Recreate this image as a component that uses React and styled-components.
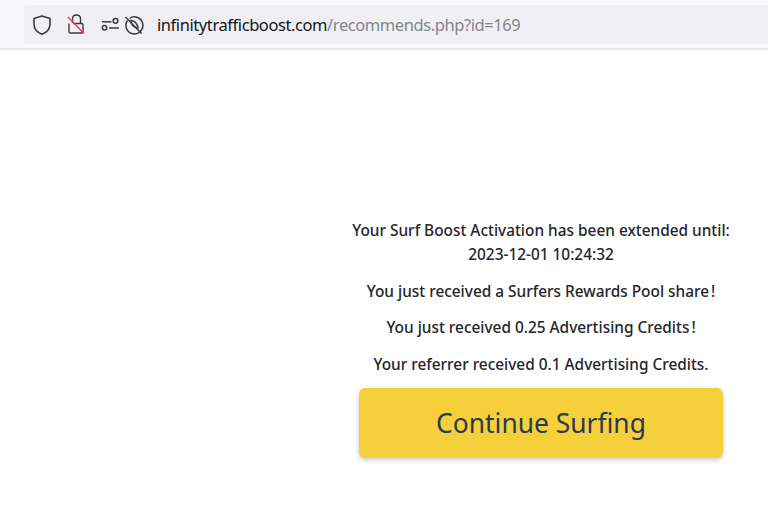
import styled, { createGlobalStyle } from 'styled-components'

const Global = createGlobalStyle`
  html, body {
    margin: 0;
    background: #fff;
  }
`

const Page = styled.div`
  width: 768px;
  height: 518px;
  overflow: hidden;
  background: #fff;
`

const Toolbar = styled.div`
  height: 43px;
  padding: 5px 0 0 24px;
  background: #f9f9fb;
  border-bottom: 2px solid #e6e6e8;
`

const UrlBar = styled.div`
  height: 39px;
  display: flex;
  align-items: center;
  background: #f0f0f4;
  border-radius: 4px 0 0 4px;
  padding-left: 8px;
`

const IconSlot = styled.span`
  display: flex;
  width: ${props => props.$w}px;
  margin-top: 1px;
`

const Host = styled.span`
  font-family: 'Noto Sans', sans-serif;
  font-size: 16.5px;
  letter-spacing: -0.42px;
  color: #15141a;
  margin-left: 10px;
`

const Path = styled.span`
  color: #85848a;
`

const Content = styled.main`
  display: flex;
  justify-content: flex-end;
  padding: 169px 31px 0 0;
`

const Column = styled.div`
  width: 392px;
  display: flex;
  flex-direction: column;
  align-items: center;
`

const Message = styled.p`
  margin: 0 0 12.5px;
  font-family: 'Noto Sans', sans-serif;
  font-size: 15.4px;
  font-weight: 500;
  line-height: 24px;
  color: #25252b;
  text-align: center;
`

const Bang = styled.span`
  margin-left: 2px;
`

const Button = styled.a`
  width: 364px;
  height: 70px;
  margin-top: -1px;
  display: flex;
  align-items: center;
  justify-content: center;
  background: #f5d03b;
  border-radius: 6px;
  box-shadow: 0 2px 5px rgba(0, 0, 0, 0.22);
  font-family: 'Noto Sans', sans-serif;
  font-size: 26.4px;
  color: #2b3a52;
`

const Shield = () => (
  <svg width="20" height="22" viewBox="0 0 20 22" fill="none" stroke="#3a3a40" strokeWidth="1.6">
    <path d="M10 2 L18 4.6 V10 C18 15 14.5 18.5 10 20.2 C5.5 18.5 2 15 2 10 V4.6 Z" strokeLinejoin="round" />
  </svg>
)

const BrokenLock = () => (
  <svg width="20" height="22" viewBox="0 0 20 22" fill="none">
    <path d="M6.5 9 V5 C6.5 2.6 8 1 10.5 1 C13 1 14.5 2.6 14.5 5 V9" stroke="#3a3a40" strokeWidth="1.4" />
    <path d="M7 9.5 H15.5 C16.4 9.5 17 10.1 17 11 V17.5 C17 18.4 16.4 19 15.5 19 H4.5 C3.6 19 3 18.4 3 17.5 V9.5" stroke="#3a3a40" strokeWidth="1.4" />
    <path d="M2 3 L18 19.5" stroke="#f0385f" strokeWidth="1.5" />
  </svg>
)

const Permissions = () => (
  <svg width="20" height="16" viewBox="0 0 20 16" fill="none" stroke="#3a3a40" strokeWidth="1.5">
    <path d="M1 4.8 H10.5" />
    <circle cx="14.5" cy="3.8" r="2.4" />
    <circle cx="3.5" cy="10.8" r="2.2" />
    <path d="M8 11 H18" />
  </svg>
)

const TrackingOff = () => (
  <svg width="22" height="22" viewBox="0 0 22 22" fill="none" stroke="#3a3a40" strokeWidth="1.5">
    <path d="M4.5 4.5 A8.5 8.5 0 1 1 2.5 6.5" />
    <path d="M6 6.5 C9 6.5 12.5 9.5 13 14 C9 14 6 10.5 6 6.5 Z" />
    <path d="M0.5 3 L16.5 19.5" />
  </svg>
)

export default function App () {
  return (
    <Page>
      <Global />
      <Toolbar>
        <UrlBar>
          <IconSlot $w={34}><Shield /></IconSlot>
          <IconSlot $w={35}><BrokenLock /></IconSlot>
          <IconSlot $w={24}><Permissions /></IconSlot>
          <IconSlot $w={22}><TrackingOff /></IconSlot>
          <Host>infinitytrafficboost.com<Path>/recommends.php?id=169</Path></Host>
        </UrlBar>
      </Toolbar>
      <Content>
        <Column>
          <Message>Your Surf Boost Activation has been extended until:<br />2023-12-01 10:24:32</Message>
          <Message>You just received a Surfers Rewards Pool share<Bang>!</Bang></Message>
          <Message>You just received 0.25 Advertising Credits<Bang>!</Bang></Message>
          <Message>Your referrer received 0.1 Advertising Credits.</Message>
          <Button>Continue Surfing</Button>
        </Column>
      </Content>
    </Page>
  )
}
